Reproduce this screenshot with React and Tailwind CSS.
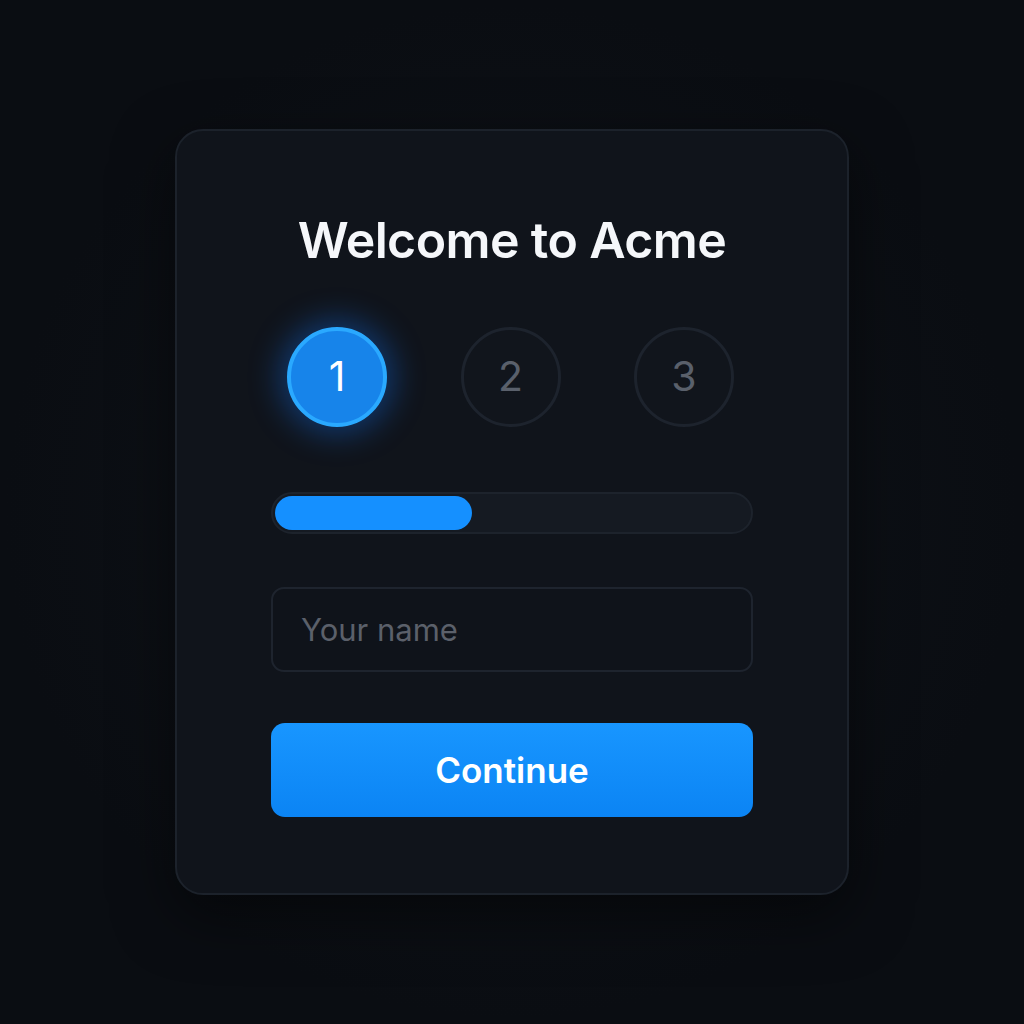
import { useState } from "react";

const steps = [1, 2, 3];

function StepCircle({ n, active }) {
  if (active) {
    return (
      <div className="flex h-[100px] w-[100px] items-center justify-center rounded-full border-[4px] border-[#2aa9ff] bg-[#1784ea] shadow-[0_0_30px_8px_rgba(20,120,255,0.35)]">
        <span className="text-[41px] font-normal text-white">{n}</span>
      </div>
    );
  }
  return (
    <div className="flex h-[100px] w-[100px] items-center justify-center rounded-full border-[3px] border-[#1d232d] bg-[#11151c]">
      <span className="text-[41px] font-normal text-[#5a606b]">{n}</span>
    </div>
  );
}

export default function App() {
  const [name, setName] = useState("");
  const current = 1;

  return (
    <div
      className="flex min-h-screen items-center justify-center bg-[radial-gradient(circle_at_50%_50%,#10141a_0%,#0a0d12_70%)]"
      style={{ fontFamily: "Inter, 'Noto Sans', sans-serif" }}
    >
      <div className="flex w-[674px] flex-col rounded-[28px] border-[2px] border-[#1c222b] bg-[#10141b] px-[94px] pb-[76px] pt-[79px] shadow-[0_20px_60px_rgba(0,0,0,0.5)]">
        <h1 className="text-center text-[50px] font-semibold leading-[60px] tracking-[-0.6px] text-[#f5f7fa]">
          Welcome to Acme
        </h1>

        <div className="mt-[57px] flex items-center justify-between pl-[16px] pr-[19px]">
          {steps.map((n) => (
            <StepCircle key={n} n={n} active={n === current} />
          ))}
        </div>

        <div className="mt-[65px] h-[42px] w-full rounded-full border-[2px] border-[#1d232c] bg-[#151a22] p-[2px]">
          <div className="h-full w-[41.5%] rounded-full bg-[#1590ff]" />
        </div>

        <input
          value={name}
          onChange={(e) => setName(e.target.value)}
          placeholder="Your name"
          className="mt-[53px] h-[85px] w-full rounded-[13px] border-[2px] border-[#1e242e] bg-[#0f131a] px-[28px] text-[31px] text-white outline-none placeholder:text-[#5b606a]"
        />

        <button className="mt-[51px] h-[94px] w-full rounded-[14px] bg-gradient-to-b from-[#1896ff] to-[#0b84f4] text-[35px] font-semibold text-white">
          Continue
        </button>
      </div>
    </div>
  );
}
